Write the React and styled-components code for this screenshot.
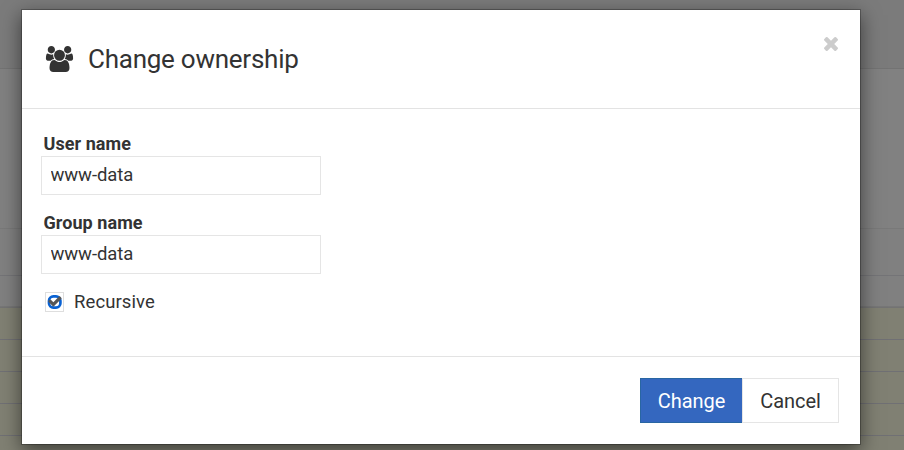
import React from "react";
import styled, { createGlobalStyle } from "styled-components";

const GlobalStyle = createGlobalStyle`
  * { box-sizing: border-box; }
  body { margin: 0; background: #808080; overflow: hidden; }
  button, input { font: inherit; color: inherit; }
`;

const Page = styled.main`
  position: relative;
  width: 904px;
  height: 450px;
  overflow: hidden;
  color: #333;
  font-family: Roboto, sans-serif;
`;

const TableRow = styled.div`
  height: ${(p) => p.$height}px;
  background: ${(p) => p.$tone};
  border-bottom: 1px solid ${(p) => p.$line};
  box-shadow: inset 0 -1px ${(p) => p.$edge || "transparent"};
`;

const Dialog = styled.section`
  position: absolute;
  left: 21px;
  top: 9px;
  width: 840px;
  height: 436px;
  display: flex;
  flex-direction: column;
  background: #fff;
  background-clip: padding-box;
  border: 1px solid rgba(0, 0, 0, 0.25);
  box-shadow: 0 6px 18px rgba(0, 0, 0, 0.5);
`;

const Header = styled.header`
  height: 99px;
  flex: none;
  display: flex;
  align-items: flex-start;
  border-bottom: 1px solid #e3e3e3;
  padding: 27px 22px 0 23px;
`;

const Title = styled.h1`
  flex: 1;
  margin: 7px 0 0 14px;
  font-size: 26px;
  line-height: 30px;
  font-weight: 400;
  letter-spacing: -0.25px;
`;

const GroupIcon = styled.svg`
  width: 29px;
  height: 26px;
  margin-top: 9px;
  fill: #333;
`;

const CloseButton = styled.button`
  display: flex;
  padding: 0;
  border: 0;
  background: none;
`;

const CloseIcon = styled.svg`
  width: 14px;
  height: 14px;
  fill: #ccc;
`;

const Body = styled.div`
  flex: 1;
  padding: 24px 19px 0;
`;

const Field = styled.label`
  display: block;
  height: 79px;
`;

const Label = styled.span`
  display: block;
  height: 23px;
  padding-left: 2.5px;
  font-size: 18px;
  line-height: 22px;
  font-weight: 700;
  letter-spacing: 0.06px;
`;

const TextInput = styled.input`
  display: block;
  width: 280px;
  height: 39px;
  padding: 0 8.5px 2px;
  border: 1px solid #e5e5e5;
  border-radius: 0;
  background: #fff;
  font-size: 18.5px;
  letter-spacing: -0.1px;
  outline: none;
`;

const CheckLine = styled.label`
  display: flex;
  align-items: flex-start;
  height: 22px;
  padding-left: 4px;
  font-size: 18.5px;
  line-height: 22px;
  letter-spacing: 0.1px;
`;

const CheckBox = styled.span`
  display: flex;
  width: 19px;
  height: 20px;
  margin: 1px 10px 0 0;
`;

const Footer = styled.footer`
  height: 88px;
  flex: none;
  display: flex;
  justify-content: flex-end;
  align-items: flex-start;
  border-top: 1px solid #e3e3e3;
  padding: 21px 21px 0;
`;

const Button = styled.button`
  width: ${(p) => p.$width}px;
  height: 45px;
  padding: 0;
  border: 1px solid #e5e5e5;
  background: #fff;
  font-size: 20px;
  line-height: 24px;
  letter-spacing: -0.05px;
  ${(p) =>
    p.$primary &&
    `
    color: #fff;
    background: #3467bf;
    border-color: #2966a3;
    border-right: 0;
  `}
`;

const rows = [
  [69, "#7b7b7b", "#737373"],
  [160, "#818181", "#797979"],
  [47, "#808080", "#747477"],
  [32, "#808080", "#737373", "#777777"],
  [32, "#808073", "#707074"],
  [32, "#808073", "#707074"],
  [32, "#808073", "#707074"],
  [32, "#808073", "#707074"],
  [32, "#808073", "#707074"],
];

function UsersGlyph() {
  return (
    <GroupIcon viewBox="0 0 2048 1792" preserveAspectRatio="none" aria-hidden="true">
      <path d="M657 896q-162 5-265 128h-134q-82 0-138-40.5t-56-118.5q0-353 124-353 6 0 43.5 21t97.5 42.5 119 21.5q67 0 133-23-5 37-5 66 0 139 81 256zm1071 637q0 120-73 189.5t-194 69.5h-874q-121 0-194-69.5t-73-189.5q0-53 3.5-103.5t14-109 26.5-108.5 43-97.5 62-81 85.5-53.5 111.5-20q10 0 43 21.5t73 48 107 48 135 21.5 135-21.5 107-48 73-48 43-21.5q61 0 111.5 20t85.5 53.5 62 81 43 97.5 26.5 108.5 14 109 3.5 103.5zm-1024-1277q0 106-75 181t-181 75-181-75-75-181 75-181 181-75 181 75 75 181zm704 384q0 159-112.5 271.5t-271.5 112.5-271.5-112.5-112.5-271.5 112.5-271.5 271.5-112.5 271.5 112.5 112.5 271.5zm576 225q0 78-56 118.5t-138 40.5h-134q-103-123-265-128 81-117 81-256 0-29-5-66 66 23 133 23 59 0 119-21.5t97.5-42.5 43.5-21q124 0 124 353zm-128-609q0 106-75 181t-181 75-181-75-75-181 75-181 181-75 181 75 75 181z" />
    </GroupIcon>
  );
}

function CheckGlyph() {
  return (
    <svg width="19" height="20" viewBox="0 0 19 20" aria-hidden="true">
      <rect x="0.5" y="0.5" width="18" height="19" fill="#fff" stroke="#dedede" />
      <rect x="4" y="4.3" width="11.4" height="11.4" rx="4.4" fill="#fff" stroke="#0962d3" strokeWidth="2.7" />
      <path
        transform="translate(2.3 1.5) scale(.0085)"
        fill="#555"
        d="M1671 566q0 40-28 68l-724 724-136 136q-28 28-68 28t-68-28l-136-136-362-362q-28-28-28-68t28-68l136-136q28-28 68-28t68 28l294 295 656-657q28-28 68-28t68 28l136 136q28 28 28 68z"
      />
    </svg>
  );
}

export default function App() {
  return (
    <Page>
      <GlobalStyle />
      {rows.map(([height, tone, line, edge], i) => (
        <TableRow key={i} $height={height} $tone={tone} $line={line} $edge={edge} />
      ))}
      <Dialog role="dialog" aria-label="Change ownership">
        <Header>
          <UsersGlyph />
          <Title>Change ownership</Title>
          <CloseButton aria-label="Close">
            <CloseIcon viewBox="302 366 1188 1188" aria-hidden="true">
              <path d="M1490 1322q0 40-28 68l-136 136q-28 28-68 28t-68-28l-294-294-294 294q-28 28-68 28t-68-28l-136-136q-28-28-28-68t28-68l294-294-294-294q-28-28-28-68t28-68l136-136q28-28 68-28t68 28l294 294 294-294q28-28 68-28t68 28l136 136q28 28 28 68t-28 68l-294 294 294 294q28 28 28 68z" />
            </CloseIcon>
          </CloseButton>
        </Header>
        <Body>
          <Field>
            <Label>User name</Label>
            <TextInput defaultValue="www-data" />
          </Field>
          <Field>
            <Label>Group name</Label>
            <TextInput defaultValue="www-data" />
          </Field>
          <CheckLine>
            <CheckBox role="checkbox" aria-checked="true">
              <CheckGlyph />
            </CheckBox>
            Recursive
          </CheckLine>
        </Body>
        <Footer>
          <Button $primary $width={102}>Change</Button>
          <Button $width={97}>Cancel</Button>
        </Footer>
      </Dialog>
    </Page>
  );
}
